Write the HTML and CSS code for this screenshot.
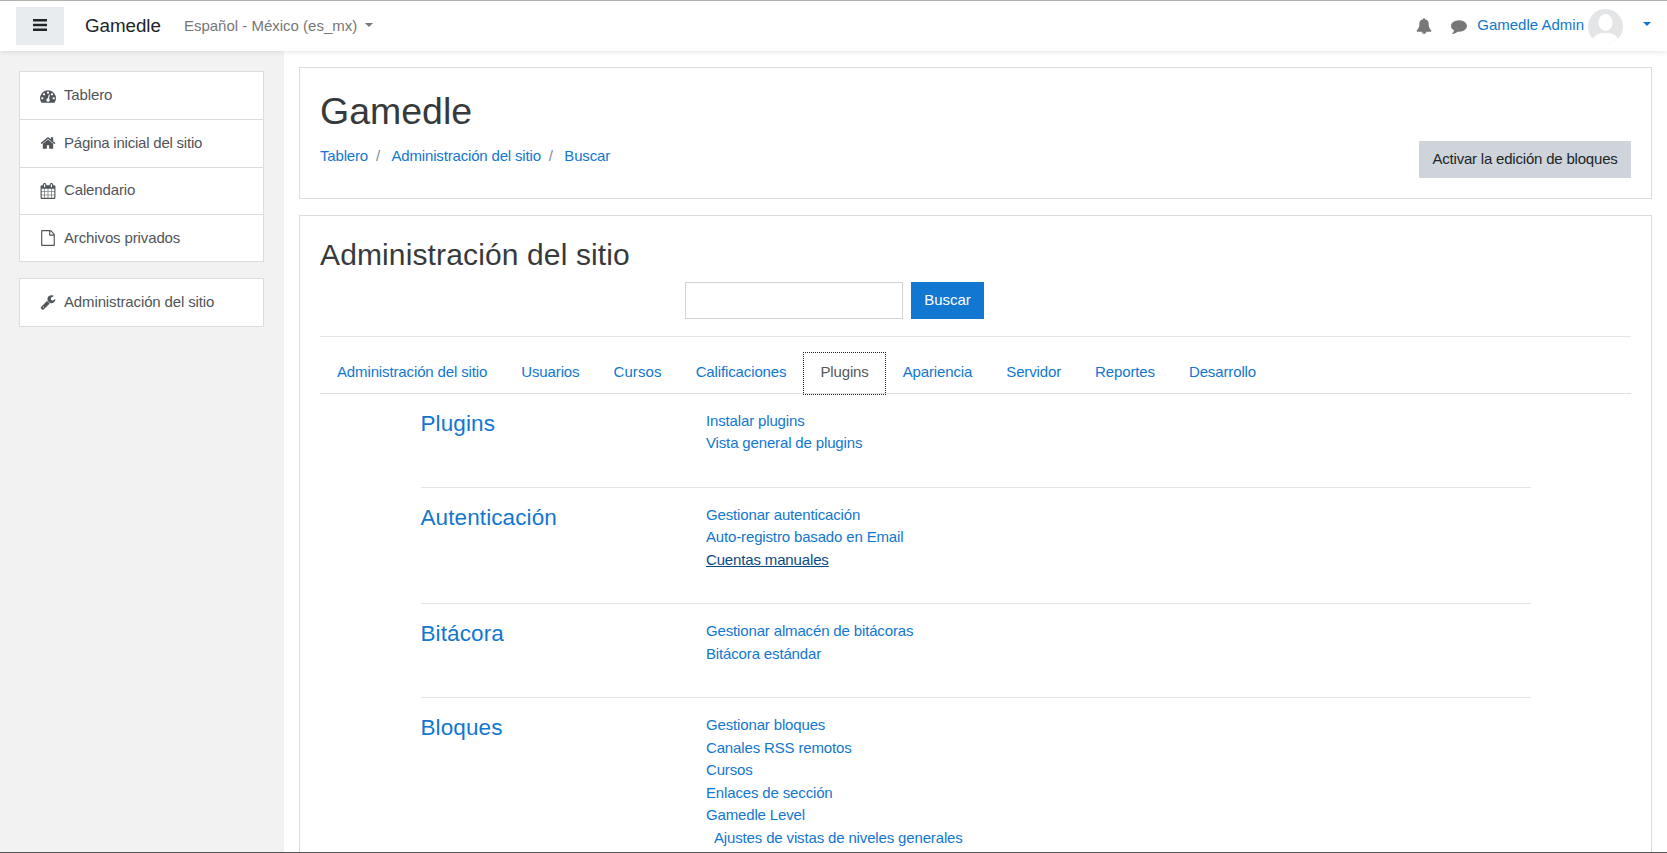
FILE: index.html
```html
<!DOCTYPE html>
<html lang="es">
<head>
<meta charset="utf-8">
<title>Gamedle: Administración del sitio</title>
<link rel="stylesheet" href="styles.css">
</head>
<body>
<div class="page">
  <header class="navbar">
    <button class="menu-btn" type="button" aria-label="Menú">
      <svg class="bars" viewBox="0 0 14 12"><path d="M0 0h14v2.500H0zM0 4.800h14v2.500H0zM0 9.500h14V12H0z"/></svg>
    </button>
    <a class="brand">Gamedle</a>
    <a class="lang">Español - México (es_mx)<span class="caret"></span></a>
    <div class="nav-right">
      <svg class="nav-icon bell" viewBox="0 0 1792 1792"><path d="M912 1696q0-16-16-16-59 0-101.500-42.500t-42.500-101.500q0-16-16-16t-16 16q0 73 51.500 124.500t124.500 51.500q16 0 16-16zm816-288q0 52-38 90t-90 38h-448q0 106-75 181t-181 75-181-75-75-181h-448q-52 0-90-38t-38-90q50-42 91-88t85-119.500 74.500-158.500 50-206 19.500-260q0-152 117-282.500t307-158.500q-8-19-8-39 0-40 28-68t68-28 68 28 28 68q0 20-8 39 190 28 307 158.500t117 282.500q0 139 19.500 260t50 206 74.500 158.500 85 119.500 91 88z"/></svg>
      <svg class="nav-icon comment" viewBox="0 0 1792 1792"><path d="M1792 896q0 174-120 321.500t-326 233-450 85.500q-70 0-145-8-198 175-460 242-49 14-114 22-17 2-30.500-9t-17.500-29v-1q-3-4-.5-12t2-10 4.500-9.500l6-9 7-8.500 8-9q7-8 31-34.500t34.500-38 31-39.500 32.500-51 27-59 26-76q-157-89-247.500-220t-90.500-281q0-130 71-248.500t191-204.500 286-136.500 348-50.500q244 0 450 85.500t326 233 120 321.500z"/></svg>
      <a class="user">Gamedle Admin</a>
      <svg class="avatar" viewBox="0 0 35 35"><defs><clipPath id="av"><circle cx="17.500" cy="17.500" r="17.500"/></clipPath></defs><g clip-path="url(#av)"><rect width="35" height="35" fill="#e4e5e6"/><ellipse cx="17.500" cy="13.500" rx="7" ry="8.500" fill="#fff"/><path d="M4 35c0-7 4-10 10-11h7c6 1 10 4 10 11z" fill="#fff"/></g></svg>
      <span class="caret caret-blue"></span>
    </div>
  </header>

  <div class="layout">
    <aside class="sidebar">
      <nav class="side-card">
        <a class="side-item"><svg class="side-icon" viewBox="0 0 1792 1792"><path d="M384 1152q0-53-37.500-90.500t-90.500-37.500-90.500 37.500-37.500 90.500 37.500 90.500 90.500 37.500 90.500-37.500 37.500-90.500zm192-448q0-53-37.500-90.500t-90.500-37.500-90.500 37.500-37.500 90.500 37.500 90.500 90.500 37.500 90.500-37.500 37.500-90.500zm428 481l101-382q6-26-7.500-48.500t-38.500-29.500-48 6.500-30 39.500l-101 382q-60 5-107 43.500t-63 98.500q-20 77 20 146t117 89 146-20 89-117q16-60-6-117t-72-91zm660-33q0-53-37.500-90.500t-90.500-37.500-90.500 37.500-37.500 90.500 37.500 90.500 90.500 37.500 90.500-37.500 37.500-90.500zm-640-640q0-53-37.500-90.500t-90.500-37.500-90.500 37.500-37.500 90.500 37.500 90.500 90.500 37.500 90.500-37.500 37.500-90.500zm448 192q0-53-37.500-90.500t-90.500-37.500-90.500 37.500-37.500 90.500 37.500 90.500 90.500 37.500 90.500-37.500 37.500-90.500zm320 448q0 261-141 483-19 29-54 29h-1402q-35 0-54-29-141-221-141-483 0-182 71-348t191-286 286-191 348-71 348 71 286 191 191 286 71 348z"/></svg>Tablero</a>
        <a class="side-item tight"><svg class="side-icon" viewBox="0 0 1792 1792"><path d="M1472 992v480q0 26-19 45t-45 19h-384v-384h-256v384h-384q-26 0-45-19t-19-45v-480q0-1 .5-3t.5-3l575-474 575 474q1 2 1 6zm223-69l-62 74q-8 9-21 11h-3q-13 0-21-7l-692-577-692 577q-12 8-24 7-13-2-21-11l-62-74q-8-10-7-23.500t11-21.500l719-599q32-26 76-26t76 26l244 204v-195q0-14 9-23t23-9h192q14 0 23 9t9 23v408l219 182q10 8 11 21.500t-7 23.500z"/></svg>Página inicial del sitio</a>
        <a class="side-item"><svg class="side-icon" viewBox="0 0 1792 1792"><path d="M192 1664h288v-288h-288v288zm352 0h320v-288h-320v288zm-352-352h288v-320h-288v320zm352 0h320v-320h-320v320zm-352-384h288v-288h-288v288zm736 736h320v-288h-320v288zm-384-736h320v-288h-320v288zm768 736h288v-288h-288v288zm-384-352h320v-320h-320v320zm-352-864v-288q0-13-9.500-22.500t-22.500-9.500h-64q-13 0-22.500 9.500t-9.500 22.500v288q0 13 9.500 22.500t22.500 9.500h64q13 0 22.500-9.500t9.500-22.500zm736 864h288v-320h-288v320zm-384-384h320v-288h-320v288zm384 0h288v-288h-288v288zm32-480v-288q0-13-9.500-22.500t-22.500-9.500h-64q-13 0-22.500 9.500t-9.500 22.500v288q0 13 9.500 22.500t22.500 9.500h64q13 0 22.500-9.500t9.500-22.500zm384-64v1280q0 52-38 90t-90 38h-1408q-52 0-90-38t-38-90v-1280q0-52 38-90t90-38h128v-96q0-66 47-113t113-47h64q66 0 113 47t47 113v96h384v-96q0-66 47-113t113-47h64q66 0 113 47t47 113v96h128q52 0 90 38t38 90z"/></svg>Calendario</a>
        <a class="side-item"><svg class="side-icon" viewBox="0 0 1792 1792"><path d="M1596 380q28 28 48 76t20 88v1152q0 40-28 68t-68 28h-1344q-40 0-68-28t-28-68v-1600q0-40 28-68t68-28h896q40 0 88 20t76 48zm-444-244v376h376q-10-29-22-41l-313-313q-12-12-41-22zm384 1528v-1024h-416q-40 0-68-28t-28-68v-416h-768v1536h1280z"/></svg>Archivos privados</a>
      </nav>
      <nav class="side-card">
        <a class="side-item single"><svg class="side-icon" viewBox="0 0 1792 1792"><path d="M448 1472q0-26-19-45t-45-19-45 19-19 45 19 45 45 19 45-19 19-45zm644-420l-682 682q-37 37-90 37-52 0-91-37l-106-108q-38-36-38-90 0-53 38-91l681-681q39 98 114.500 173.500t173.500 114.500zm634-435q0 39-23 106-47 134-164.500 217.500t-258.500 83.500q-185 0-316.500-131.500t-131.500-316.500 131.500-316.500 316.500-131.500q58 0 121.500 16.500t107.500 46.500q16 11 16 28t-16 28l-293 169v224l193 107q5-3 79-48.500t135.500-81 70.500-35.500q15 0 23.500 10t8.500 25z"/></svg>Administración del sitio</a>
      </nav>
    </aside>

    <main class="main">
      <section class="card header-card">
        <div>
          <h1 class="title">Gamedle</h1>
          <ol class="crumbs">
            <li><a>Tablero</a></li>
            <li class="sep">/</li>
            <li><a>Administración del sitio</a></li>
            <li class="sep">/</li>
            <li><a>Buscar</a></li>
          </ol>
        </div>
        <button class="btn-edit" type="button">Activar la edición de bloques</button>
      </section>

      <section class="card admin-card">
        <h2 class="admin-title">Administración del sitio</h2>
        <form class="search">
          <input class="search-input" type="text" aria-label="Buscar">
          <button class="search-btn" type="button">Buscar</button>
        </form>
        <hr class="rule">
        <ul class="tabs">
          <li class="tab"><a>Administración del sitio</a></li>
          <li class="tab"><a>Usuarios</a></li>
          <li class="tab tab-wide"><a>Cursos</a></li>
          <li class="tab"><a>Calificaciones</a></li>
          <li class="tab active"><a>Plugins</a></li>
          <li class="tab"><a>Apariencia</a></li>
          <li class="tab"><a>Servidor</a></li>
          <li class="tab"><a>Reportes</a></li>
          <li class="tab"><a>Desarrollo</a></li>
        </ul>
        <div class="settings">
          <div class="section section-first">
            <h4 class="sec-title">Plugins</h4>
            <ul class="links"><li><a>Instalar plugins</a></li><li><a>Vista general de plugins</a></li></ul>
          </div>
          <hr class="sec-rule">
          <div class="section">
            <h4 class="sec-title">Autenticación</h4>
            <ul class="links"><li><a>Gestionar autenticación</a></li><li><a>Auto-registro basado en Email</a></li><li><a class="focused">Cuentas manuales</a></li></ul>
          </div>
          <hr class="sec-rule">
          <div class="section">
            <h4 class="sec-title">Bitácora</h4>
            <ul class="links"><li><a>Gestionar almacén de bitácoras</a></li><li><a>Bitácora estándar</a></li></ul>
          </div>
          <hr class="sec-rule">
          <div class="section">
            <h4 class="sec-title">Bloques</h4>
            <ul class="links"><li><a>Gestionar bloques</a></li><li><a>Canales RSS remotos</a></li><li><a>Cursos</a></li><li><a>Enlaces de sección</a></li><li><a>Gamedle Level</a></li><li class="sub"><a>Ajustes de vistas de niveles generales</a></li></ul>
          </div>
        </div>
      </section>
    </main>
  </div>
</div>
</body>
</html>
```
FILE: styles.css
```css
* { box-sizing: border-box; }
html, body { margin: 0; height: 100%; overflow: hidden; }
body {
  font-family: "Liberation Sans", Arial, sans-serif;
  font-size: 15px;
  line-height: 22.5px;
  color: #373a3c;
  background: #fff;
}
a { color: #1177d1; text-decoration: none; }
ul, ol { list-style: none; margin: 0; padding: 0; }
h1, h2, h4 { margin: 0; font-weight: 400; }
hr { border: 0; margin: 0; }

.page {
  height: 853px;
  display: flex;
  flex-direction: column;
  border-top: 1px solid #b4b4ae;
  border-bottom: 1px solid #555;
  overflow: hidden;
}

/* Navbar */
.navbar {
  flex: 0 0 50px;
  display: flex;
  align-items: center;
  padding: 0 16px;
  background: #fff;
  box-shadow: 0 2px 4px rgba(0, 0, 0, .08);
  position: relative;
  z-index: 2;
}
.menu-btn {
  width: 48px;
  height: 38px;
  border: 0;
  padding: 0;
  background: #e9ecef;
  display: flex;
  align-items: center;
  justify-content: center;
}
.bars { width: 14px; height: 12px; fill: #212529; margin-top: -2px; }
.brand { margin: 1px 0 0 21px; font-size: 18.75px; color: #212529; letter-spacing: -.03px; }
.lang { margin-left: 23px; color: #777; display: flex; align-items: center; }
.caret {
  display: inline-block;
  margin-left: 8px;
  border-top: 4.500px solid #777;
  border-left: 4.500px solid transparent;
  border-right: 4.500px solid transparent;
  margin-top: -2px;
}
.nav-right { margin-left: auto; display: flex; align-items: center; margin-top: -2px; }
.nav-icon { fill: #777; width: 16px; height: 16px; }
.bell { margin-right: 19px; margin-top: 1px; }
.comment { margin-right: 10px; margin-top: 1px; }
.user { margin-right: 4px; }
.avatar { width: 35px; height: 35px; margin-top: 2px; }
.caret-blue { border-top-color: #1177d1; margin-left: 20px; margin-top: -3px; }

/* Layout */
.layout { flex: 1; display: flex; min-height: 0; }
.sidebar {
  flex: 0 0 284px;
  background: #f2f2f2;
  padding: 20px 20px 0 19px;
  display: flex;
  flex-direction: column;
  gap: 16px;
  letter-spacing: -.13px;
}
.side-card { background: #fff; border: 1px solid #dcdcdc; }
.side-item {
  display: flex;
  align-items: center;
  height: 47.250px;
  padding: 0 0 0 20px;
  color: #50555a;
  border-top: 1px solid #dcdcdc;
}
.side-item:first-child { border-top: 0; }
.side-item.single { height: 46.500px; }
.side-item.tight { letter-spacing: -.22px; }
.side-icon { width: 16px; height: 16px; fill: #50555a; margin-right: 8px; flex: none; }

/* Main */
.main { flex: 1; min-width: 0; padding: 16px 15px 0; letter-spacing: -.13px; }
.card { background: #fff; border: 1px solid #dcdcdc; }
.header-card {
  height: 132px;
  padding: 21px 20px 20px;
  display: flex;
  justify-content: space-between;
  align-items: flex-end;
}
.header-card > div { align-self: flex-start; }
.title { font-size: 37.5px; line-height: 45px; letter-spacing: 0; }
.crumbs { display: flex; margin-top: 11px; letter-spacing: -.17px; }
.sep { color: #818a91; padding: 0 11.500px 0 8px; }
.btn-edit {
  width: 212px;
  height: 37px;
  padding: 0;
  border: 0;
  background: #ced4da;
  color: #212529;
  font: inherit;
  letter-spacing: -.2px;
}
.admin-card { margin-top: 16px; padding: 21px 20px 0; height: 800px; }
.admin-title { font-size: 30px; line-height: 36px; letter-spacing: .13px; }
.search { display: flex; gap: 8px; margin-top: 9px; padding-left: 365px; }
.search-input { width: 218px; height: 37px; border: 1px solid #ced4da; background: #fff; }
.search-btn {
  width: 73px;
  height: 37px;
  border: 0;
  background: #1177d1;
  color: #fff;
  font: inherit;
  letter-spacing: 0;
}
.rule { border-top: 1px solid #e5e5e5; margin-top: 17px; }
.tabs { display: flex; margin-top: 15px; border-bottom: 1px solid #dee2e6; height: 42px; }
.tab a { display: block; height: 42px; padding: 9px 17px; line-height: 22.5px; }
.tab-wide { letter-spacing: .12px; }
.tab.active { outline: 1px dotted #212529; outline-offset: -1px; height: 42.500px; }
.tab.active a { color: #55595c; }
.settings { width: 1110px; margin: 15.750px auto 0; }
.section { display: flex; padding-bottom: 32px; }
.section-first { padding-bottom: 32.250px; }
.sec-title { flex: 0 0 285.500px; font-size: 22.5px; line-height: 27px; color: #1177d1; letter-spacing: .1px; }
.links { flex: 1; letter-spacing: -.15px; }
.sub { padding-left: 8px; }
.focused { color: #0a4a82; text-decoration: underline; }
.sec-rule { border-top: 1px solid #e5e5e5; margin-bottom: 16px; }
.section-first + .sec-rule { margin-bottom: 15.500px; }
```
